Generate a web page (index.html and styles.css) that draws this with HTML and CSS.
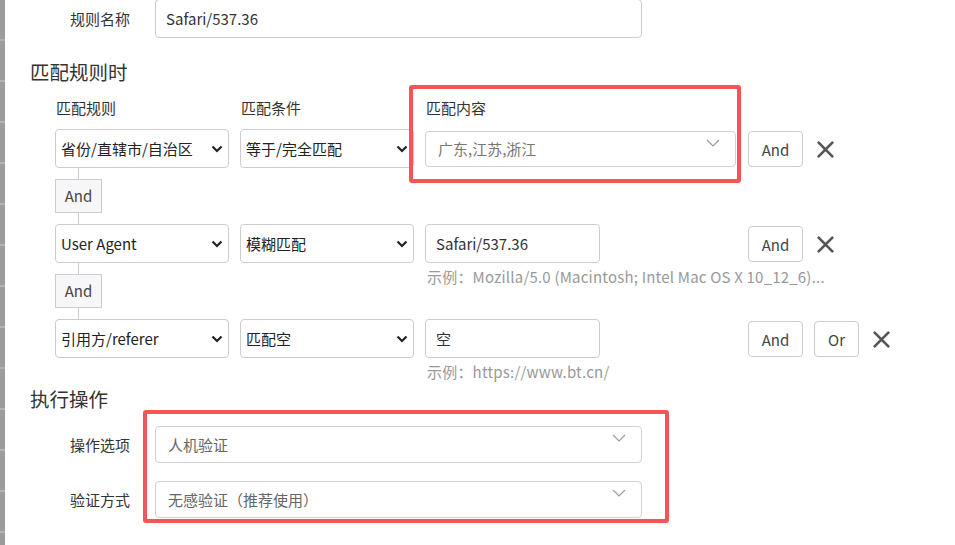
FILE: index.html
```html
<!DOCTYPE html>
<html lang="zh-CN">
<head>
<meta charset="utf-8">
<title>匹配规则</title>
<link rel="stylesheet" href="styles.css">
</head>
<body>
<div class="page">
  <div class="strip"></div>
  <main class="form">
    <div class="field field-top">
      <label class="field-label">规则名称</label>
      <div class="input input-wide">Safari/537.36</div>
    </div>

    <h3 class="section">匹配规则时</h3>
    <div class="cols">
      <span class="col">匹配规则</span>
      <span class="col">匹配条件</span>
      <span class="col">匹配内容</span>
    </div>

    <div class="rule rule-first">
      <div class="select">省份/直辖市/自治区<svg class="chev" viewBox="0 0 12 8"><path d="M1.5 1.5 6 6l4.5-4.5"/></svg></div>
      <div class="select">等于/完全匹配<svg class="chev" viewBox="0 0 12 8"><path d="M1.5 1.5 6 6l4.5-4.5"/></svg></div>
      <div class="cell">
        <div class="lselect lselect-content">广东,江苏,浙江<svg class="thin" viewBox="0 0 14 8"><path d="M1 1l6 6 6-6"/></svg></div>
      </div>
      <div class="actions">
        <button class="btn btn-and">And</button>
        <svg class="close" viewBox="0 0 20 20"><path d="M2 2l16 16M18 2 2 18"/></svg>
      </div>
    </div>

    <div class="link"><i class="line"></i><span class="link-box">And</span><i class="line"></i></div>

    <div class="rule">
      <div class="select">User Agent<svg class="chev" viewBox="0 0 12 8"><path d="M1.5 1.5 6 6l4.5-4.5"/></svg></div>
      <div class="select">模糊匹配<svg class="chev" viewBox="0 0 12 8"><path d="M1.5 1.5 6 6l4.5-4.5"/></svg></div>
      <div class="cell">
        <div class="input input-short">Safari/537.36</div>
        <div class="hint">示例：Mozilla/5.0 (Macintosh; Intel Mac OS X 10_12_6)...</div>
      </div>
      <div class="actions">
        <button class="btn btn-and">And</button>
        <svg class="close" viewBox="0 0 20 20"><path d="M2 2l16 16M18 2 2 18"/></svg>
      </div>
    </div>

    <div class="link"><i class="line"></i><span class="link-box">And</span><i class="line"></i></div>

    <div class="rule">
      <div class="select">引用方/referer<svg class="chev" viewBox="0 0 12 8"><path d="M1.5 1.5 6 6l4.5-4.5"/></svg></div>
      <div class="select">匹配空<svg class="chev" viewBox="0 0 12 8"><path d="M1.5 1.5 6 6l4.5-4.5"/></svg></div>
      <div class="cell">
        <div class="input input-short">空</div>
        <div class="hint">示例：https://www.bt.cn/</div>
      </div>
      <div class="actions">
        <button class="btn btn-and">And</button>
        <button class="btn btn-or">Or</button>
        <svg class="close" viewBox="0 0 20 20"><path d="M2 2l16 16M18 2 2 18"/></svg>
      </div>
    </div>

    <h3 class="section section-exec">执行操作</h3>
    <div class="field field-op">
      <label class="field-label">操作选项</label>
      <div class="lselect lselect-wide">人机验证<svg class="thin" viewBox="0 0 14 8"><path d="M1 1l6 6 6-6"/></svg></div>
    </div>
    <div class="field field-verify">
      <label class="field-label">验证方式</label>
      <div class="lselect lselect-wide">无感验证（推荐使用）<svg class="thin" viewBox="0 0 14 8"><path d="M1 1l6 6 6-6"/></svg></div>
    </div>
  </main>
  <div class="mark mark-content"></div>
  <div class="mark mark-exec"></div>
</div>
</body>
</html>
```

FILE: styles.css
```css
* { box-sizing: border-box; }

html, body {
  margin: 0;
  padding: 0;
  background: #fff;
  overflow: hidden;
}

body {
  font-family: "Noto Sans CJK SC", "Noto Sans", sans-serif;
  font-size: 15px;
  color: #333;
}

.page {
  position: relative;
  display: flex;
  width: 955px;
  height: 545px;
  overflow: hidden;
}

.strip {
  flex: 0 0 5px;
  background-color: #9c9c9c;
  background-image: repeating-linear-gradient(180deg, #9c9c9c 0, #9c9c9c 39px, #b4b4b4 39px, #b4b4b4 41px);
}

.form {
  flex: 1;
  margin-top: -1px;
  padding-left: 25px;
}

.field {
  display: flex;
  align-items: center;
  gap: 25px;
}

.field-label {
  width: 100px;
  text-align: right;
  color: #333;
  line-height: 20px;
}

.input {
  height: 39px;
  border: 1px solid #ccc;
  border-radius: 4px;
  padding: 0 10px;
  line-height: 37px;
  color: #333;
  white-space: nowrap;
}

.input-wide { width: 487px; }
.input-short { width: 175px; }

.section {
  margin: 21px 0 0;
  font-size: 19.5px;
  font-weight: normal;
  line-height: 26px;
  color: #333;
}

.section-exec { margin-top: 28px; }

.cols {
  display: flex;
  gap: 11px;
  margin-top: 13px;
  padding-left: 26px;
  line-height: 20px;
}

.col {
  width: 174px;
}

.rule {
  display: flex;
  align-items: flex-start;
  gap: 11px;
  margin-left: 25px;
}

.rule-first { margin-top: 11px; }

.select {
  position: relative;
  width: 174px;
  height: 39px;
  border: 1px solid #ccc;
  border-radius: 4px;
  padding: 0 22px 0 5px;
  line-height: 37px;
  color: #222;
  white-space: nowrap;
  overflow: hidden;
}

.chev {
  position: absolute;
  right: 5px;
  top: 15px;
  width: 12px;
  height: 8px;
  fill: none;
  stroke: #222;
  stroke-width: 2.2;
}

.cell {
  width: 311px;
  height: 39px;
}

.lselect {
  position: relative;
  border: 1px solid #d2d2d2;
  border-radius: 4px;
  padding: 0 12px;
  color: #777;
  white-space: nowrap;
}

.lselect-content {
  height: 36px;
  margin-top: 2px;
  line-height: 34px;
}

.lselect-wide {
  width: 487px;
  height: 37px;
  line-height: 35px;
  color: #666;
}

.thin {
  position: absolute;
  right: 15px;
  top: 7px;
  width: 14px;
  height: 8px;
  fill: none;
  stroke: #999;
  stroke-width: 1.1;
}

.hint {
  margin-top: 4px;
  padding-left: 2px;
  line-height: 20px;
  color: #999;
  white-space: nowrap;
  letter-spacing: 0.2px;
}

.actions {
  display: flex;
  align-items: center;
  gap: 11px;
  margin-left: 1px;
  margin-top: 2px;
  height: 36px;
}

.btn {
  height: 36px;
  border: 1px solid #ccc;
  border-radius: 4px;
  background: #fff;
  font-family: inherit;
  font-size: 15px;
  color: #444;
  padding: 0;
}

.btn-and { width: 55px; }
.btn-or { width: 45px; }

.close {
  width: 19px;
  height: 19px;
  margin-left: 2px;
  fill: none;
  stroke: #555;
  stroke-width: 2.8;
}

.link {
  display: flex;
  flex-direction: column;
  align-items: flex-start;
  margin-left: 25px;
}

.line {
  display: block;
  width: 1px;
  height: 11px;
  margin-left: 23px;
  background: #ccc;
}

.link-box {
  width: 47px;
  height: 34px;
  border: 1px solid #ccc;
  background: #f7f7fa;
  color: #444;
  text-align: center;
  line-height: 32px;
}

.field-op { margin-top: 14px; }
.field-verify { margin-top: 18px; }

.mark {
  position: absolute;
  border: 4px solid #f55555;
  border-radius: 3px;
  pointer-events: none;
}

.mark-content {
  left: 409px;
  top: 85px;
  width: 332px;
  height: 98px;
}

.mark-exec {
  left: 143px;
  top: 410px;
  width: 526px;
  height: 113px;
}
```
